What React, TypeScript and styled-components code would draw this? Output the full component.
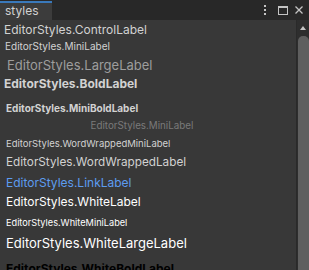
import React from "react";
import styled, { createGlobalStyle } from "styled-components";

const GlobalStyle = createGlobalStyle`
  html, body { margin: 0; padding: 0; background: #383838; }
  body { font-family: Inter, "Noto Sans", sans-serif; -webkit-font-smoothing: antialiased; }
`;

const Window = styled.div`
  width: 309px;
  height: 270px;
  display: flex;
  flex-direction: column;
  overflow: hidden;
  background: #383838;
`;

const TitleBar = styled.div`
  height: 20px;
  flex: none;
  display: flex;
  align-items: flex-end;
  background: #282828;
  box-sizing: border-box;
`;

const Tab = styled.div`
  width: 52px;
  height: 19px;
  box-sizing: border-box;
  border-top: 2px solid #3a79bb;
  background: #3c3c3c;
  color: #d2d2d2;
  font-size: 12px;
  line-height: 16px;
  padding-left: 5px;
`;

const Actions = styled.div`
  margin-left: auto;
  align-self: stretch;
  display: flex;
  align-items: center;
  padding-right: 6px;
  color: #c4c4c4;
`;

const Icon = styled.svg<{ $gap: number }>`
  display: block;
  margin-left: ${(p) => p.$gap}px;
`;

const Body = styled.div`
  flex: 1;
  min-height: 0;
  display: flex;
`;

const List = styled.div`
  flex: 1;
  min-width: 0;
  display: flex;
  flex-direction: column;
  padding-top: 3.4px;
`;

const Row = styled.div<{
  $size: number;
  $h: number;
  $color: string;
  $bold?: boolean;
  $x?: number;
  $center?: boolean;
}>`
  flex: none;
  height: ${(p) => p.$h}px;
  font-size: ${(p) => p.$size}px;
  line-height: ${(p) => p.$size * 1.21}px;
  font-weight: ${(p) => (p.$bold ? 700 : 400)};
  color: ${(p) => p.$color};
  padding-left: ${(p) => p.$x ?? 6}px;
  text-align: ${(p) => (p.$center ? "center" : "left")};
  padding-right: ${(p) => (p.$center ? 18 : 0)}px;
  white-space: nowrap;
`;

const Scrollbar = styled.div`
  width: 13px;
  flex: none;
  display: flex;
  flex-direction: column;
  align-items: center;
  background: #2e2e2e;
  border-left: 1px solid #2a2a2a;
  box-sizing: border-box;
  padding-top: 6px;
`;

const Arrow = styled.div`
  width: 0;
  height: 0;
  border-left: 3.5px solid transparent;
  border-right: 3.5px solid transparent;
  border-bottom: 4px solid #c4c4c4;
`;

const Thumb = styled.div`
  margin-top: 6px;
  width: 11px;
  flex: 1;
  background: #5f5f5f;
  border-radius: 5px 5px 0 0;
`;

const rows = [
  { t: "EditorStyles.ControlLabel", s: 12, h: 16.6, c: "#d2d2d2", x: 4 },
  { t: "EditorStyles.MiniLabel", s: 10, h: 17.7, c: "#d2d2d2", x: 5 },
  { t: "EditorStyles.LargeLabel", s: 13, h: 19.7, c: "#9d9d9d", x: 7 },
  { t: "EditorStyles.BoldLabel", s: 12, h: 24.9, c: "#d2d2d2", x: 4, b: true },
  { t: "EditorStyles.MiniBoldLabel", s: 10, h: 17.3, c: "#d2d2d2", x: 6, b: true },
  { t: "EditorStyles.MiniLabel", s: 9.8, h: 18.2, c: "#7a7a7a", center: true },
  { t: "EditorStyles.WordWrappedMiniLabel", s: 9.5, h: 17.1, c: "#d2d2d2" },
  { t: "EditorStyles.WordWrappedLabel", s: 11.75, h: 20.8, c: "#d2d2d2" },
  { t: "EditorStyles.LinkLabel", s: 12, h: 19.4, c: "#5d9cf0" },
  { t: "EditorStyles.WhiteLabel", s: 12, h: 21.7, c: "#ffffff" },
  { t: "EditorStyles.WhiteMiniLabel", s: 9.2, h: 18.9, c: "#ffffff" },
  { t: "EditorStyles.WhiteLargeLabel", s: 13, h: 26.3, c: "#ffffff" },
  { t: "EditorStyles.WhiteBoldLabel", s: 12, h: 20, c: "#000000", b: true },
];

export default function App() {
  return (
    <Window>
      <GlobalStyle />
      <TitleBar>
        <Tab>styles</Tab>
        <Actions>
          <Icon $gap={0} width="4" height="10" viewBox="0 0 4 10">
            <rect x="1" y="0" width="2" height="2" fill="currentColor" />
            <rect x="1" y="4" width="2" height="2" fill="currentColor" />
            <rect x="1" y="8" width="2" height="2" fill="currentColor" />
          </Icon>
          <Icon $gap={11} width="10" height="9" viewBox="0 0 10 9">
            <rect x="0.5" y="0.5" width="9" height="8" fill="none" stroke="currentColor" />
            <rect x="0" y="0" width="10" height="2" fill="currentColor" />
          </Icon>
          <Icon $gap={7} width="8" height="8" viewBox="0 0 8 8">
            <path d="M0.5 0.5 L7.5 7.5 M7.5 0.5 L0.5 7.5" stroke="currentColor" strokeWidth="1.3" />
          </Icon>
        </Actions>
      </TitleBar>
      <Body>
        <List>
          {rows.map((r, i) => (
            <Row key={i} $size={r.s} $h={r.h} $color={r.c} $bold={r.b} $x={r.x} $center={r.center}>
              {r.t}
            </Row>
          ))}
        </List>
        <Scrollbar>
          <Arrow />
          <Thumb />
        </Scrollbar>
      </Body>
    </Window>
  );
}
